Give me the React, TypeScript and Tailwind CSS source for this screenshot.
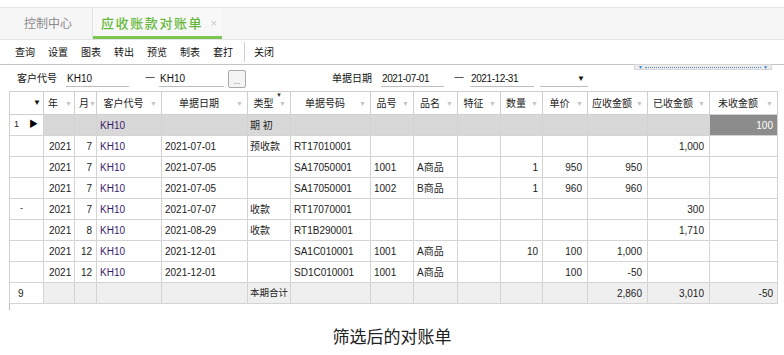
import React from 'react';

type Row = {
  ind?: string;
  year?: string;
  mon?: string;
  cust?: string;
  date?: string;
  type?: string;
  no?: string;
  pn?: string;
  name?: string;
  qty?: string;
  price?: string;
  ar?: string;
  rec?: string;
  un?: string;
  kind?: 'open' | 'total';
};

const rows: Row[] = [
  { ind: '1', cust: 'KH10', type: '期 初', un: '100', kind: 'open' },
  { year: '2021', mon: '7', cust: 'KH10', date: '2021-07-01', type: '预收款', no: 'RT17010001', rec: '1,000' },
  { year: '2021', mon: '7', cust: 'KH10', date: '2021-07-05', no: 'SA17050001', pn: '1001', name: 'A商品', qty: '1', price: '950', ar: '950' },
  { year: '2021', mon: '7', cust: 'KH10', date: '2021-07-05', no: 'SA17050001', pn: '1002', name: 'B商品', qty: '1', price: '960', ar: '960' },
  { ind: '-', year: '2021', mon: '7', cust: 'KH10', date: '2021-07-07', type: '收款', no: 'RT17070001', rec: '300' },
  { year: '2021', mon: '8', cust: 'KH10', date: '2021-08-29', type: '收款', no: 'RT1B290001', rec: '1,710' },
  { year: '2021', mon: '12', cust: 'KH10', date: '2021-12-01', no: 'SA1C010001', pn: '1001', name: 'A商品', qty: '10', price: '100', ar: '1,000' },
  { year: '2021', mon: '12', cust: 'KH10', date: '2021-12-01', no: 'SD1C010001', pn: '1001', name: 'A商品', price: '100', ar: '-50' },
  { ind: '9', type: '本期合计', ar: '2,860', rec: '3,010', un: '-50', kind: 'total' },
];

const headers = ['年', '月', '客户代号', '单据日期', '类型', '单据号码', '品号', '品名', '特征', '数量', '单价', '应收金额', '已收金额', '未收金额'];

const font = { fontFamily: '"Liberation Sans", "Noto Sans CJK SC", sans-serif' };

const Filter = () => <span className="text-[7px] text-[#c4c4c4] leading-none">▼</span>;

const App = () => {
  const tools = ['查询', '设置', '图表', '转出', '预览', '制表', '套打'];

  return (
    <div className="w-[784px] h-[355px] bg-white relative overflow-hidden text-[#222]" style={font}>
      <div className="h-[7px]" />
      {/* tab bar */}
      <div className="h-[33px] bg-[#f6f6f6] border-t border-b border-[#e4e4e4] flex items-stretch">
        <div className="w-[93px] flex items-center justify-center pl-[4px] text-[12px] text-[#8a8a8a] border-r border-[#e2e2e2]">
          控制中心
        </div>
        <div className="w-[129px] flex items-center relative bg-[#f8f8f8]">
          <span className="pl-[8px] text-[13px] tracking-[1.6px] text-[#66b83c] font-medium">应收账款对账单</span>
          <span className="ml-auto mr-[5px] text-[11px] text-[#c8c8c8]">×</span>
          <div className="absolute left-0 right-0 bottom-0 h-[3px] bg-[#7cc552]" />
        </div>
      </div>
      {/* toolbar */}
      <div className="h-[25px] flex items-center border-b border-[#c4c4c4] text-[10px] text-[#111]">
        <div className="flex items-center pl-[15px] gap-[13px]">
          {tools.map((t) => (
            <span key={t}>{t}</span>
          ))}
        </div>
        <div className="w-px h-[20px] bg-[#cfcfcf] ml-[11px]" />
        <span className="ml-[9px]">关闭</span>
      </div>
      {/* filter row */}
      <div className="h-[26px] flex items-center text-[10px] text-[#111]">
        <span className="ml-[17px]">客户代号</span>
        <div className="ml-[9px] w-[63px] h-[18px] border-b border-[#bdbdbd] flex items-center pl-[1px] pt-[2px]">KH10</div>
        <span className="ml-[16px] text-[#333]">一</span>
        <div className="ml-[4px] w-[65px] h-[18px] border-b border-[#bdbdbd] flex items-center pl-[1px] pt-[2px]">KH10</div>
        <div className="ml-[4px] w-[18px] h-[18px] mt-[2px] border border-[#a9a9a9] rounded-[2px] bg-[#f4f4f4] flex items-end justify-center text-[8px] leading-[10px] text-[#555]">
          ...
        </div>
        <span className="ml-[86px]">单据日期</span>
        <div className="ml-[9px] w-[63px] h-[18px] border-b border-[#bdbdbd] flex items-center pl-[1px] pt-[2px] tracking-[-0.4px]">2021-07-01</div>
        <span className="ml-[10px] text-[#333]">一</span>
        <div className="ml-[6px] w-[64px] h-[18px] border-b border-[#bdbdbd] flex items-center pl-[1px] pt-[2px] tracking-[-0.4px]">2021-12-31</div>
        <div className="ml-[6px] w-[48px] h-[18px] border-b border-[#bdbdbd] flex items-center justify-end pr-[3px] pt-[2px] text-[8px]">▼</div>
      </div>
      {/* splitter handle */}
      <div className="absolute left-[634px] top-[64px] w-[138px] h-[6px] bg-[#ececec] border border-[#d6d6d6] flex items-center px-[3px] gap-[2px]">
        <span className="text-[5px] leading-none text-[#3b82d6]">▼</span>
        <div className="flex-1 border-t border-dotted border-[#4a8ad8]" />
        <span className="text-[5px] leading-none text-[#3b82d6]">▼</span>
      </div>
      {/* grid */}
      <div
        className="ml-[9px] w-[769px] grid grid-cols-[34px_31px_22px_65px_86px_43px_80px_43px_44px_43px_42px_45px_60px_62px_68px] border-l border-t border-[#cfcfcf] text-[10px]"
      >
        <div className="h-[23px] border-r border-b border-[#cfcfcf] flex items-center justify-end pr-[2px] text-[8px] text-[#111]">▼</div>
        {headers.map((h, i) => (
          <div
            key={h}
            className={`h-[23px] border-r border-b border-[#cfcfcf] flex items-center relative ${i < 2 ? 'pl-[4px] pr-[2px]' : 'pr-[4px]'}`}
          >
            <span className={`${i < 2 ? '' : 'flex-1 text-center'} text-[#222]`}>{h}</span>
            {i < 2 && <span className="flex-1" />}
            <Filter />
            {h === '类型' && (
              <span className="absolute top-[0px] left-[28px] text-[6px] leading-none text-[#333]">▼</span>
            )}
          </div>
        ))}
        {rows.map((r, ri) => {
          const bg = r.kind === 'open' ? 'bg-[#d8d8d8]' : r.kind === 'total' ? 'bg-[#efefef]' : 'bg-white';
          const cell = `h-[21px] border-r border-b border-[#d4d4d4] flex items-center whitespace-nowrap ${bg}`;
          return (
            <React.Fragment key={ri}>
              <div className="h-[21px] border-r border-b border-[#d4d4d4] bg-white flex items-center pl-[4px] pr-[5px] text-[9px]">
                <span className={r.ind === '-' ? 'pl-[6px]' : r.ind === '9' ? 'pl-[4px] text-[10px]' : ''}>{r.ind}</span>
                {r.kind === 'open' && <span className="ml-auto text-[9px] text-black">▶</span>}
              </div>
              <div className={`${cell} pl-[5px]`}>{r.year}</div>
              <div className={`${cell} justify-end pr-[4px]`}>{r.mon}</div>
              <div className={`${cell} pl-[3px] text-[#3a1c6e]`}>{r.cust}</div>
              <div className={`${cell} pl-[3px]`}>{r.date}</div>
              <div className={`${cell} pl-[2px] ${r.kind === 'total' ? 'text-[9.5px]' : ''}`}>{r.type}</div>
              <div className={`${cell} pl-[3px]`}>{r.no}</div>
              <div className={`${cell} pl-[3px]`}>{r.pn}</div>
              <div className={`${cell} pl-[3px]`}>{r.name}</div>
              <div className={cell} />
              <div className={`${cell} justify-end pr-[4px]`}>{r.qty}</div>
              <div className={`${cell} justify-end pr-[5px]`}>{r.price}</div>
              <div className={`${cell} justify-end pr-[5px]`}>{r.ar}</div>
              <div className={`${cell} justify-end pr-[5px]`}>{r.rec}</div>
              <div
                className={`${cell} justify-end pr-[4px] ${r.kind === 'open' ? '!bg-[#8c8c8c] text-white' : ''}`}
              >
                {r.un}
              </div>
            </React.Fragment>
          );
        })}
      </div>
      <div className="ml-[9px] w-[769px] h-[6px] border-l border-[#bdbdbd]" />
      {/* caption */}
      <div className="mt-[14px] text-center text-[17px] leading-[24px] text-[#222]" style={{ fontFamily: '"Noto Sans CJK SC", serif' }}>
        筛选后的对账单
      </div>
    </div>
  );
};

export default App;
